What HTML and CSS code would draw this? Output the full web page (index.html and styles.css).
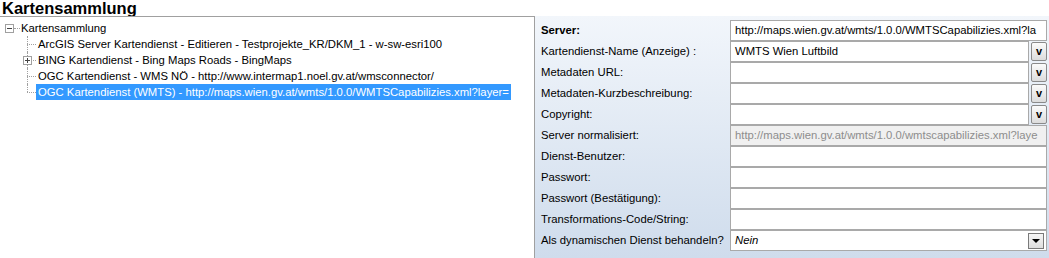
FILE: index.html
```html
<!DOCTYPE html>
<html lang="de">
<head>
<meta charset="utf-8">
<title>Kartensammlung</title>
<link rel="stylesheet" href="styles.css">
</head>
<body>
<h1 class="title">Kartensammlung</h1>
<div class="main">
  <div class="tree">
    <div class="node root">
      <span class="box minus"></span>
      <span class="label">Kartensammlung</span>
    </div>
    <div class="children">
      <div class="node child"><span class="label">ArcGIS Server Kartendienst - Editieren - Testprojekte_KR/DKM_1 - w-sw-esri100</span></div>
      <div class="node child"><span class="box plus"></span><span class="label">BING Kartendienst - Bing Maps Roads - BingMaps</span></div>
      <div class="node child"><span class="label">OGC Kartendienst - WMS NÖ - http://www.intermap1.noel.gv.at/wmsconnector/</span></div>
      <div class="node child last"><span class="label selected">OGC Kartendienst (WMTS) - http://maps.wien.gv.at/wmts/1.0.0/WMTSCapabilizies.xml?layer=</span></div>
    </div>
  </div>
  <div class="props">
    <div class="grid">
      <div class="lbl bold">Server:</div>
      <div class="val"><div class="field">http://maps.wien.gv.at/wmts/1.0.0/WMTSCapabilizies.xml?la</div></div>

      <div class="lbl">Kartendienst-Name (Anzeige) :</div>
      <div class="val"><div class="field">WMTS Wien Luftbild</div><div class="vbtn">v</div></div>

      <div class="lbl">Metadaten URL:</div>
      <div class="val"><div class="field"></div><div class="vbtn">v</div></div>

      <div class="lbl">Metadaten-Kurzbeschreibung:</div>
      <div class="val"><div class="field"></div><div class="vbtn">v</div></div>

      <div class="lbl">Copyright:</div>
      <div class="val"><div class="field"></div><div class="vbtn">v</div></div>

      <div class="lbl">Server normalisiert:</div>
      <div class="val"><div class="field disabled">http://maps.wien.gv.at/wmts/1.0.0/wmtscapabilizies.xml?laye</div></div>

      <div class="lbl">Dienst-Benutzer:</div>
      <div class="val"><div class="field"></div></div>

      <div class="lbl">Passwort:</div>
      <div class="val"><div class="field"></div></div>

      <div class="lbl">Passwort (Bestätigung):</div>
      <div class="val"><div class="field"></div></div>

      <div class="lbl">Transformations-Code/String:</div>
      <div class="val"><div class="field"></div></div>

      <div class="lbl">Als dynamischen Dienst behandeln?</div>
      <div class="val"><div class="field combo"><span class="italic">Nein</span><span class="arrow"></span></div></div>
    </div>
  </div>
</div>
</body>
</html>
```
FILE: styles.css
```css
html, body {
  margin: 0;
  padding: 0;
  background: #ffffff;
  font-family: "Liberation Sans", Arial, sans-serif;
  font-size: 11.3px;
  color: #000;
}

.title {
  margin: 0;
  padding-left: 2px;
  height: 16px;
  line-height: 16px;
  font-size: 16.5px;
  font-weight: bold;
}

.main {
  display: flex;
  height: 242px;
}

.tree {
  flex: none;
  width: 534px;
  border-top: 1px solid #a0a0a0;
  border-right: 1px solid #a0a0a0;
  padding-top: 3px;
  overflow: hidden;
  white-space: nowrap;
}

.node {
  position: relative;
  height: 16px;
  line-height: 16px;
}

.root {
  padding-left: 19px;
}

.root::before {
  content: "";
  position: absolute;
  left: 14px;
  top: 8px;
  width: 6px;
  border-top: 1px dotted #a0a0a0;
}

.box {
  position: absolute;
  width: 7px;
  height: 7px;
  border: 1px solid #a0a0a0;
  background: #fff;
  z-index: 1;
}

.box::before {
  content: "";
  position: absolute;
  left: 1px;
  top: 3px;
  width: 5px;
  height: 1px;
  background: #444;
}

.plus::after {
  content: "";
  position: absolute;
  left: 3px;
  top: 1px;
  width: 1px;
  height: 5px;
  background: #444;
}

.root .box {
  left: 5px;
  top: 4px;
}

.child .box {
  left: 23px;
  top: 4px;
}

.child {
  padding-left: 36px;
}

.child::before {
  content: "";
  position: absolute;
  left: 27px;
  top: 8px;
  width: 9px;
  border-top: 1px dotted #a0a0a0;
}

.child::after {
  content: "";
  position: absolute;
  left: 27px;
  top: 0;
  height: 16px;
  border-left: 1px dotted #a0a0a0;
}

.child.last::after {
  height: 8px;
}

.label {
  display: inline-block;
  padding: 0 2px;
  height: 16px;
}

.selected {
  background: #3399ff;
  color: #fff;
}

.props {
  flex: 1;
  padding: 4px 2px 0 6px;
  background: linear-gradient(#f2f6fb, #cfdcec);
}

.grid {
  display: grid;
  grid-template-columns: 189px 1fr;
  grid-auto-rows: 21px;
}

.lbl {
  line-height: 21px;
  white-space: nowrap;
}

.bold {
  font-weight: bold;
}

.val {
  display: flex;
  gap: 2px;
  align-items: center;
  height: 21px;
}

.field {
  flex: 1;
  height: 19px;
  line-height: 19px;
  border: 1px solid #a9a9a9;
  background: #fff;
  padding-left: 4px;
  white-space: nowrap;
  overflow: hidden;
  display: flex;
  align-items: center;
}

.field.disabled {
  background: #f0f0f0;
  color: #8d8d8d;
}

.vbtn {
  width: 14px;
  height: 17px;
  border: 1px solid #8a8a8a;
  border-radius: 2px;
  background: linear-gradient(#fbfbfb, #dcdcdc);
  font-weight: bold;
  font-size: 11px;
  line-height: 17px;
  text-align: center;
}

.combo {
  justify-content: space-between;
  padding-right: 2px;
}

.italic {
  font-style: italic;
}

.arrow {
  width: 14px;
  height: 14px;
  border: 1px solid #7a7a7a;
  background: linear-gradient(#f6f6f6, #dedede);
  position: relative;
}

.arrow::after {
  content: "";
  position: absolute;
  left: 3px;
  top: 5px;
  border-left: 4px solid transparent;
  border-right: 4px solid transparent;
  border-top: 4px solid #000;
}
```
